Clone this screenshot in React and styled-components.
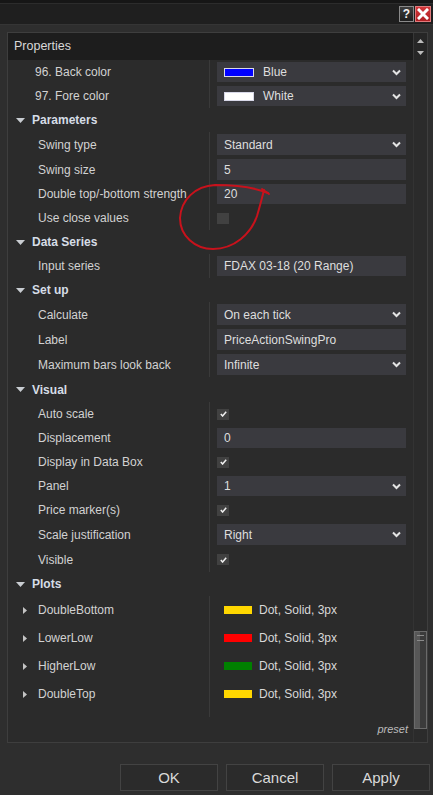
import React from 'react';
import styled, { createGlobalStyle } from 'styled-components';

const GlobalStyle = createGlobalStyle`
  html, body {
    margin: 0;
    padding: 0;
    background: #2e2e2e;
  }
  body {
    font-family: "Liberation Sans", Arial, sans-serif;
  }
`;

const rows = [
  { kind: 'prop', label: '96. Back color', indent: 27, h: 24, value: { type: 'color', color: '#0000ff', text: 'Blue' } },
  { kind: 'prop', label: '97. Fore color', indent: 27, h: 24, value: { type: 'color', color: '#ffffff', text: 'White' } },
  { kind: 'cat', label: 'Parameters', h: 24 },
  { kind: 'prop', label: 'Swing type', h: 25, value: { type: 'select', text: 'Standard' } },
  { kind: 'prop', label: 'Swing size', h: 25, value: { type: 'input', text: '5' } },
  { kind: 'prop', label: 'Double top/-bottom strength', h: 24, value: { type: 'input', text: '20' } },
  { kind: 'prop', label: 'Use close values', h: 24, value: { type: 'check', checked: false } },
  { kind: 'cat', label: 'Data Series', h: 24 },
  { kind: 'prop', label: 'Input series', h: 24, value: { type: 'input', text: 'FDAX 03-18 (20 Range)' } },
  { kind: 'cat', label: 'Set up', h: 24 },
  { kind: 'prop', label: 'Calculate', h: 25, value: { type: 'select', text: 'On each tick' } },
  { kind: 'prop', label: 'Label', h: 25, value: { type: 'input', text: 'PriceActionSwingPro' } },
  { kind: 'prop', label: 'Maximum bars look back', h: 25, value: { type: 'select', text: 'Infinite' } },
  { kind: 'cat', label: 'Visual', h: 25 },
  { kind: 'prop', label: 'Auto scale', h: 24, value: { type: 'check', checked: true } },
  { kind: 'prop', label: 'Displacement', h: 24, value: { type: 'input', text: '0' } },
  { kind: 'prop', label: 'Display in Data Box', h: 24, value: { type: 'check', checked: true } },
  { kind: 'prop', label: 'Panel', h: 24, value: { type: 'select', text: '1' } },
  { kind: 'prop', label: 'Price marker(s)', h: 24, value: { type: 'check', checked: true } },
  { kind: 'prop', label: 'Scale justification', h: 25, value: { type: 'select', text: 'Right' } },
  { kind: 'prop', label: 'Visible', h: 25, value: { type: 'check', checked: true } },
  { kind: 'cat', label: 'Plots', h: 24 },
  { kind: 'plot', label: 'DoubleBottom', h: 28, color: '#ffd700', text: 'Dot, Solid, 3px' },
  { kind: 'plot', label: 'LowerLow', h: 28, color: '#ff0000', text: 'Dot, Solid, 3px' },
  { kind: 'plot', label: 'HigherLow', h: 28, color: '#008000', text: 'Dot, Solid, 3px' },
  { kind: 'plot', label: 'DoubleTop', h: 28, color: '#ffd700', text: 'Dot, Solid, 3px' },
];

function Chevron() {
  return (
    <svg width="9" height="7" viewBox="0 0 9 7">
      <polyline points="1,1.5 4.5,5 8,1.5" fill="none" stroke="#e4e4e4" strokeWidth="2" />
    </svg>
  );
}

function ExpandedArrow() {
  return (
    <svg width="9" height="5" viewBox="0 0 9 5">
      <polygon points="0,0 9,0 4.5,5" fill="#c9cdd2" />
    </svg>
  );
}

function CollapsedArrow() {
  return (
    <svg width="4" height="7" viewBox="0 0 4 7">
      <polygon points="0,0 4,3.5 0,7" fill="#c4c4c4" />
    </svg>
  );
}

function Value({ value, h }) {
  if (value.type === 'check') {
    return (
      <CheckBox>
        {value.checked ? (
          <svg width="7" height="6" viewBox="0 0 7 6">
            <polyline points="0.8,3 2.6,5 6.2,0.8" fill="none" stroke="#f0f0f0" strokeWidth="1.5" />
          </svg>
        ) : null}
      </CheckBox>
    );
  }
  return (
    <Box h={h}>
      <BoxText>
        {value.type === 'color' ? <ColorChip color={value.color} /> : null}
        {value.text}
      </BoxText>
      {value.type === 'select' || value.type === 'color' ? <Chevron /> : null}
    </Box>
  );
}

function Row({ row }) {
  if (row.kind === 'cat') {
    return (
      <CategoryRow h={row.h}>
        <ExpandedArrow />
        <CategoryLabel>{row.label}</CategoryLabel>
      </CategoryRow>
    );
  }
  if (row.kind === 'plot') {
    return (
      <PropRow h={row.h}>
        <LabelCell indent={15}>
          <CollapsedArrow />
          <PlotName>{row.label}</PlotName>
        </LabelCell>
        <ValueCell>
          <PlotSwatch color={row.color} />
          <PlotText>{row.text}</PlotText>
        </ValueCell>
      </PropRow>
    );
  }
  return (
    <PropRow h={row.h}>
      <LabelCell indent={row.indent ?? 30}>{row.label}</LabelCell>
      <ValueCell>
        <Value value={row.value} h={row.h} />
      </ValueCell>
    </PropRow>
  );
}

export default function App() {
  return (
    <>
      <GlobalStyle />
      <Window>
        <ChartStrip />
        <TitleBar>
          <HelpButton>?</HelpButton>
          <CloseButton>
            <svg width="12" height="12" viewBox="0 0 12 12">
              <path d="M2 2 L10 10 M10 2 L2 10" stroke="#fff" strokeWidth="3" strokeLinecap="square" />
            </svg>
          </CloseButton>
        </TitleBar>
        <Body>
          <Panel>
            <PanelHeader>
              <HeaderTitle>Properties</HeaderTitle>
              <HeaderArrows>
                <svg width="7" height="4" viewBox="0 0 7 4">
                  <polygon points="0,4 7,4 3.5,0" fill="#bdbdbd" />
                </svg>
                <svg width="7" height="4" viewBox="0 0 7 4">
                  <polygon points="0,0 7,0 3.5,4" fill="#bdbdbd" />
                </svg>
              </HeaderArrows>
            </PanelHeader>
            <PanelContent>
              <Grid>
                {rows.map((row) => (
                  <Row key={row.label} row={row} />
                ))}
                <Filler>
                  <LabelCell indent={0} />
                </Filler>
                <Footer>preset</Footer>
              </Grid>
              <ScrollColumn>
                <Thumb>
                  <Grip />
                </Thumb>
              </ScrollColumn>
            </PanelContent>
          </Panel>
          <ButtonBar>
            <DialogButton>OK</DialogButton>
            <DialogButton>Cancel</DialogButton>
            <DialogButton>Apply</DialogButton>
          </ButtonBar>
        </Body>
        <Scribble width="433" height="795" viewBox="0 0 433 795">
          <path
            d="M268 193 C256 188, 240 185, 215 185 C195 186, 181 200, 180 218 C180 236, 195 249, 213 249 C234 249, 251 234, 257 216 C260 206, 262 198, 264 190"
            fill="none"
            stroke="#c8121c"
            strokeWidth="2"
            strokeLinecap="round"
          />
          <path d="M262 189 L269 194" stroke="#c8121c" strokeWidth="2" strokeLinecap="round" />
        </Scribble>
      </Window>
    </>
  );
}

const Window = styled.div`
  position: relative;
  width: 433px;
  height: 795px;
  background: #2e2e2e;
  display: flex;
  flex-direction: column;
  overflow: hidden;
`;

const ChartStrip = styled.div`
  height: 3px;
  background: #161616;
  border-bottom: 1px solid #2c2c2c;
`;

const TitleBar = styled.div`
  height: 20px;
  background: #1f1f1f;
  border-bottom: 1px solid #353535;
  display: flex;
  justify-content: flex-end;
  align-items: center;
  gap: 1px;
  padding-right: 2px;
`;

const HelpButton = styled.div`
  width: 15px;
  height: 16px;
  box-sizing: border-box;
  border: 1px solid #8a8a8a;
  background: linear-gradient(#3e3e3e, #1e1e1e);
  color: #f2f2f2;
  font-weight: bold;
  font-size: 12px;
  display: flex;
  align-items: center;
  justify-content: center;
`;

const CloseButton = styled.div`
  width: 16px;
  height: 16px;
  box-sizing: border-box;
  border: 1px solid #e07a7c;
  background: linear-gradient(#d2373a, #b01f23);
  display: flex;
  align-items: center;
  justify-content: center;
`;

const Body = styled.div`
  flex: 1;
  display: flex;
  flex-direction: column;
  padding: 7px 3px 0 7px;
`;

const Panel = styled.div`
  height: 711px;
  margin-right: 2px;
  box-sizing: border-box;
  border: 1px solid #3e3e3e;
  background: #2b2b2b;
  display: flex;
  flex-direction: column;
`;

const PanelHeader = styled.div`
  height: 27px;
  display: flex;
`;

const HeaderTitle = styled.div`
  flex: 1;
  background: #1d1d1d;
  color: #d8d8d8;
  font-size: 12.5px;
  line-height: 27px;
  padding-left: 6px;
`;

const HeaderArrows = styled.div`
  width: 14px;
  box-sizing: border-box;
  border-left: 1px solid #383838;
  background: #262626;
  display: flex;
  flex-direction: column;
  align-items: center;
  justify-content: center;
  gap: 8px;
`;

const PanelContent = styled.div`
  flex: 1;
  display: flex;
  min-height: 0;
`;

const Grid = styled.div`
  flex: 1;
  display: flex;
  flex-direction: column;
`;

const PropRow = styled.div`
  height: ${(p) => p.h}px;
  display: grid;
  grid-template-columns: 202px 1fr;
`;

const LabelCell = styled.div`
  box-sizing: border-box;
  border-right: 1px solid #3a3a3a;
  padding-left: ${(p) => p.indent}px;
  display: flex;
  align-items: center;
  color: #d2d2d2;
  font-size: 12px;
  white-space: nowrap;
`;

const ValueCell = styled.div`
  padding: 0 7px;
  display: flex;
  align-items: center;
`;

const Box = styled.div`
  flex: 1;
  height: ${(p) => p.h - 4}px;
  background: #3a3a3f;
  display: flex;
  align-items: center;
  justify-content: space-between;
  padding: 0 5px 0 6px;
`;

const BoxText = styled.div`
  display: flex;
  align-items: center;
  gap: 9px;
  color: #dedede;
  font-size: 12px;
  padding-left: 1px;
`;

const ColorChip = styled.span`
  width: 30px;
  height: 9px;
  box-sizing: border-box;
  border: 1px solid #d8d8e8;
  background: ${(p) => p.color};
`;

const CheckBox = styled.div`
  width: 12px;
  height: 11px;
  background: #414141;
  display: flex;
  align-items: center;
  justify-content: center;
`;

const CategoryRow = styled.div`
  height: ${(p) => p.h}px;
  display: flex;
  align-items: center;
  padding-left: 8px;
  gap: 7px;
`;

const CategoryLabel = styled.span`
  color: #d6dde6;
  font-size: 12px;
  font-weight: bold;
`;

const PlotName = styled.span`
  margin-left: 11px;
`;

const PlotSwatch = styled.span`
  width: 28px;
  height: 8px;
  margin-left: 7px;
  background: ${(p) => p.color};
`;

const PlotText = styled.span`
  margin-left: 7px;
  color: #d8d8d8;
  font-size: 12px;
`;

const Filler = styled.div`
  height: 9px;
  display: grid;
  grid-template-columns: 202px 1fr;
`;

const Footer = styled.div`
  flex: 1;
  text-align: right;
  padding: 6px 5px 0 0;
  color: #bcbcbc;
  font-size: 11px;
  font-style: italic;
`;

const ScrollColumn = styled.div`
  width: 14px;
  box-sizing: border-box;
  border-left: 1px solid #333;
  display: flex;
  flex-direction: column;
  justify-content: flex-end;
  padding-bottom: 13px;
`;

const Thumb = styled.div`
  position: relative;
  height: 98px;
  box-sizing: border-box;
  border: 1px solid #6a6a6a;
  background: linear-gradient(to right, #575757 0 45%, #3b3b3b 45%);
`;

const Grip = styled.div`
  position: absolute;
  top: 3px;
  left: 2px;
  right: 2px;
  height: 4px;
  border-top: 1px solid #8a8a8a;
  border-bottom: 1px solid #8a8a8a;
`;

const ButtonBar = styled.div`
  margin-top: 21px;
  display: flex;
  justify-content: flex-end;
  gap: 8px;
`;

const DialogButton = styled.div`
  width: 98px;
  height: 27px;
  box-sizing: border-box;
  border: 1px solid #434343;
  background: #2b2b2b;
  color: #d9d9d9;
  font-size: 15px;
  display: flex;
  align-items: center;
  justify-content: center;
`;

const Scribble = styled.svg`
  position: absolute;
  left: 0;
  top: 0;
  pointer-events: none;
`;
